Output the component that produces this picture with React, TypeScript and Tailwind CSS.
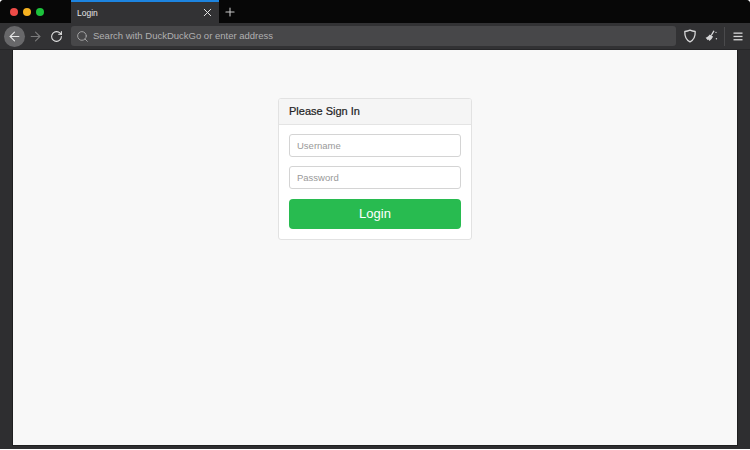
import { ArrowLeft, ArrowRight, RotateCw, Search, X, Plus } from 'lucide-react';

const font = 'font-["Liberation_Sans",Arial,sans-serif]';

function ShieldIcon() {
  return (
    <svg width="14" height="14" viewBox="0 0 14 14" fill="none">
      <path
        d="M7 1.2C5.2 2 3.4 2.4 1.8 2.5C1.6 7.5 3.2 11 7 12.8C10.8 11 12.4 7.5 12.2 2.5C10.6 2.4 8.8 2 7 1.2Z"
        stroke="#d6d6d7"
        strokeWidth="1.3"
        strokeLinejoin="round"
      />
    </svg>
  );
}

function BroomIcon() {
  return (
    <svg width="14" height="14" viewBox="0 0 14 14" fill="none">
      <path d="M7.5 6L9.8 2.2" stroke="#d6d6d7" strokeWidth="1.3" strokeLinecap="round" />
      <path d="M5.8 5.4L9 7.6C8.4 9.4 7 11 5.4 12L4.4 10.6L3.8 11.2L1.6 8.8C3.2 8.2 4.8 7 5.8 5.4Z" fill="#d6d6d7" />
      <circle cx="12.4" cy="9.8" r="0.7" fill="#d6d6d7" />
      <circle cx="12" cy="3.4" r="0.6" fill="#d6d6d7" />
    </svg>
  );
}

function MenuIcon() {
  return (
    <svg width="10" height="9" viewBox="0 0 10 9">
      <rect x="0.5" y="0.5" width="9" height="1.3" fill="#d6d6d7" />
      <rect x="0.5" y="3.8" width="9" height="1.3" fill="#d6d6d7" />
      <rect x="0.5" y="7.1" width="9" height="1.3" fill="#d6d6d7" />
    </svg>
  );
}

export default function App() {
  return (
    <div className={`${font} w-[750px] h-[450px] overflow-hidden bg-white`}>
      <div className="w-full h-[449px] flex flex-col bg-[#2e2e30] rounded-t-[4px] overflow-hidden">
        {/* Tab strip */}
        <div className="h-[23px] bg-[#070707] flex shrink-0">
          <div className="w-[71px] flex items-center gap-[5px] pl-[10px]">
            <span className="w-[8px] h-[8px] rounded-full bg-[#ee4b47]" />
            <span className="w-[8px] h-[8px] rounded-full bg-[#f5b120]" />
            <span className="w-[8px] h-[8px] rounded-full bg-[#1cc23c]" />
          </div>
          <div className="w-[148px] bg-[#323234] border-t-2 border-[#1d84e0] flex items-center justify-between pl-[6px] pr-[5px]">
            <span className="text-[8.5px] text-[#e4e4e5] pt-[1px]">Login</span>
            <X size={13} color="#e8e8e8" strokeWidth={1.8} />
          </div>
          <div className="w-[22px] flex items-center justify-center">
            <Plus size={14} color="#c9c9ca" strokeWidth={1.8} />
          </div>
        </div>

        {/* Toolbar */}
        <div className="h-[27px] bg-[#323234] flex items-center shrink-0 border-b border-[#262628]">
          <div className="w-[71px] flex items-center pl-[4px]">
            <div className="w-[21px] h-[21px] rounded-full bg-[#68686a] flex items-center justify-center">
              <ArrowLeft size={15} color="#e6e6e6" strokeWidth={1.7} />
            </div>
            <ArrowRight size={15} color="#7a7a7b" strokeWidth={1.7} className="ml-[3px]" />
            <RotateCw size={13} color="#e6e6e6" strokeWidth={1.9} className="ml-[7px]" />
          </div>
          <div className="w-[605px] h-[20px] rounded-[3px] bg-[#474749] flex items-center pl-[5px] gap-[4px]">
            <Search size={13} color="#a8a8a9" strokeWidth={1.7} />
            <span className="text-[9.5px] text-[#b0b0b1]">Search with DuckDuckGo or enter address</span>
          </div>
          <div className="flex items-center pl-[7px]">
            <ShieldIcon />
            <div className="ml-[7px]">
              <BroomIcon />
            </div>
            <div className="w-px h-[19px] bg-[#4a4a4c] ml-[6px]" />
            <div className="ml-[8px]">
              <MenuIcon />
            </div>
          </div>
        </div>

        {/* Page */}
        <div className="flex-1 flex px-[12px] pb-[3px]">
          <div className="flex-1 bg-[#f8f8f8] border-x border-b border-[#1f1f20] flex justify-center pt-[48px] items-start">
            <div className="w-[194px] bg-white border border-[#e2e2e2] rounded-[3px] overflow-hidden">
              <div className="h-[26px] bg-[#f5f5f5] border-b border-[#e4e4e4] flex items-center px-[10px]">
                <span className="text-[11px] text-[#222] [-webkit-text-stroke:0.2px_#222]">Please Sign In</span>
              </div>
              <div className="px-[10px] pt-[9px] pb-[10px] flex flex-col">
                <input
                  placeholder="Username"
                  className="w-full h-[23px] border border-[#d4d4d4] rounded-[3px] bg-white px-[7px] text-[9.5px] placeholder:text-[#999] outline-none"
                />
                <input
                  type="text"
                  placeholder="Password"
                  className="w-full h-[23px] mt-[9px] border border-[#d4d4d4] rounded-[3px] bg-white px-[7px] text-[9.5px] placeholder:text-[#999] outline-none"
                />
                <button className="w-full h-[30px] mt-[10px] rounded-[4px] bg-[#28bb50] text-white text-[13px]">
                  Login
                </button>
              </div>
            </div>
          </div>
        </div>
      </div>
    </div>
  );
}
